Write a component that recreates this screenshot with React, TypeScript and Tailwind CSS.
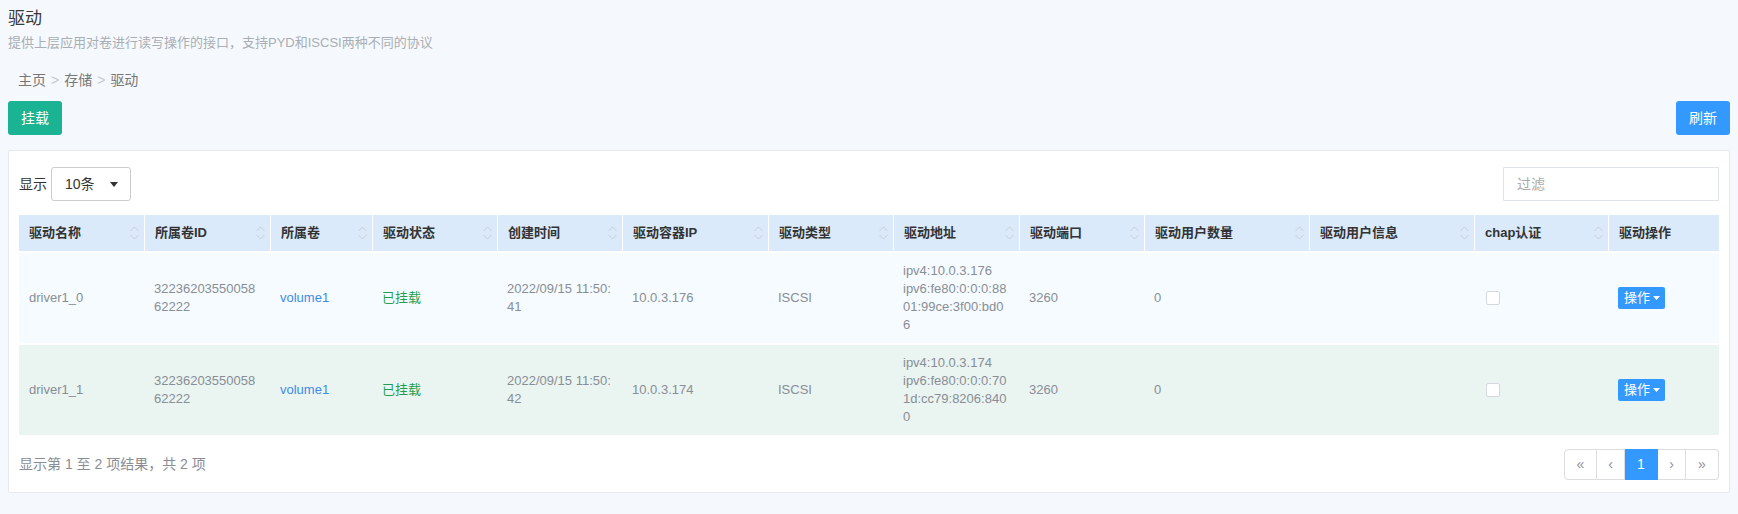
import React from "react";

const headers = [
  "驱动名称",
  "所属卷ID",
  "所属卷",
  "驱动状态",
  "创建时间",
  "驱动容器IP",
  "驱动类型",
  "驱动地址",
  "驱动端口",
  "驱动用户数量",
  "驱动用户信息",
  "chap认证",
  "驱动操作",
];

const colClasses = [
  "w-[125px]",
  "w-[126px]",
  "w-[102px]",
  "w-[125px]",
  "w-[125px]",
  "w-[146px]",
  "w-[125px]",
  "w-[126px]",
  "w-[125px]",
  "w-[165px]",
  "w-[165px]",
  "w-[134px]",
  "w-[111px]",
];

type Row = {
  name: string;
  volId: string;
  vol: string;
  status: string;
  time: string;
  ip: string;
  type: string;
  addr: string[];
  port: string;
  users: string;
  bg: string;
};

const rows: Row[] = [
  {
    name: "driver1_0",
    volId: "3223620355005862222",
    vol: "volume1",
    status: "已挂载",
    time: "2022/09/15 11:50:41",
    ip: "10.0.3.176",
    type: "ISCSI",
    addr: ["ipv4:10.0.3.176", "ipv6:fe80:0:0:0:8801:99ce:3f00:bd06"],
    port: "3260",
    users: "0",
    bg: "bg-[#f6fbff]",
  },
  {
    name: "driver1_1",
    volId: "3223620355005862222",
    vol: "volume1",
    status: "已挂载",
    time: "2022/09/15 11:50:42",
    ip: "10.0.3.174",
    type: "ISCSI",
    addr: ["ipv4:10.0.3.174", "ipv6:fe80:0:0:0:701d:cc79:8206:8400"],
    port: "3260",
    users: "0",
    bg: "bg-[#eaf4f1]",
  },
];

function SortIcon() {
  return (
    <svg width="9" height="14" viewBox="0 0 9 14" fill="none" stroke="#c9cdd2" strokeWidth="1" className="shrink-0">
      <path d="M0.5 5 L4.5 1 L8.5 5" />
      <path d="M0.5 9 L4.5 13 L8.5 9" />
    </svg>
  );
}

function Caret({ color, w, h }: { color: string; w: number; h: number }) {
  return (
    <svg width={w} height={h} viewBox={`0 0 ${w} ${h}`} className="shrink-0">
      <path d={`M0 0 L${w} 0 L${w / 2} ${h} Z`} fill={color} />
    </svg>
  );
}

export default function App() {
  const td = "px-[10px] py-[9px] align-middle border-t-2 border-white break-all";
  return (
    <div className="min-h-screen bg-[#f5f9fd] px-[8px] font-['Liberation_Sans','Noto_Sans_CJK_SC',sans-serif]">
      <div className="pt-[7px] text-[17px] leading-[24px] text-[#3a3a3a]">驱动</div>
      <div className="mt-[3px] text-[13px] leading-[18px] text-[#a9aeb4]">
        提供上层应用对卷进行读写操作的接口，支持PYD和ISCSI两种不同的协议
      </div>
      <div className="mt-[18px] pl-[10px] flex text-[14px] leading-[20px] text-[#777]">
        <span>主页</span>
        <span className="px-[5px] text-[#c8c8c8]">&gt;</span>
        <span>存储</span>
        <span className="px-[5px] text-[#c8c8c8]">&gt;</span>
        <span>驱动</span>
      </div>
      <div className="mt-[11px] flex justify-between">
        <button className="h-[34px] w-[54px] rounded-[3px] bg-[#1ab394] text-[14px] text-white">挂载</button>
        <button className="h-[34px] w-[54px] rounded-[3px] bg-[#3399ff] text-[14px] text-white">刷新</button>
      </div>

      <div className="mt-[15px] rounded-[2px] border border-[#e7eaec] bg-white px-[10px] pt-[16px] pb-[12px]">
        <div className="flex h-[34px] items-center justify-between">
          <div className="flex items-center">
            <span className="text-[14px] text-[#333]">显示</span>
            <div className="ml-[4px] flex h-[34px] w-[80px] items-center justify-between rounded-[3px] border border-[#cccccc] pl-[13px] pr-[12px] text-[14px] text-[#333]">
              <span>10条</span>
              <Caret color="#333" w={8} h={5} />
            </div>
          </div>
          <input
            placeholder="过滤"
            className="h-[34px] w-[216px] border border-[#dfe5eb] pl-[13px] text-[14px] text-[#333] outline-none placeholder:text-[#aaaaaa]"
          />
        </div>

        <table className="mt-[14px] w-[1700px] table-fixed border-separate border-spacing-0 text-[13px] leading-[18px]">
          <colgroup>
            {colClasses.map((c, i) => (
              <col key={i} className={c} />
            ))}
          </colgroup>
          <thead>
            <tr className="bg-[#daeafb]">
              {headers.map((h, i) => (
                <th
                  key={h}
                  className={`py-[9px] pl-[10px] pr-[5px] text-left font-bold text-[#333] ${i > 0 ? "border-l border-white" : ""}`}
                >
                  <div className="flex items-center justify-between">
                    <span className="whitespace-nowrap">{h}</span>
                    {i < headers.length - 1 && <SortIcon />}
                  </div>
                </th>
              ))}
            </tr>
          </thead>
          <tbody className="text-[#888e96]">
            {rows.map((r) => (
              <tr key={r.name} className={r.bg}>
                <td className={td}>{r.name}</td>
                <td className={td}>{r.volId}</td>
                <td className={`${td} text-[#3f8ae6]`}>{r.vol}</td>
                <td className={`${td} text-[#1f9f55]`}>{r.status}</td>
                <td className={td}>{r.time}</td>
                <td className={td}>{r.ip}</td>
                <td className={td}>{r.type}</td>
                <td className={td}>
                  {r.addr[0]}
                  <br />
                  {r.addr[1]}
                </td>
                <td className={td}>{r.port}</td>
                <td className={td}>{r.users}</td>
                <td className={td}></td>
                <td className={td}>
                  <div className="ml-[2px] h-[14px] w-[14px] rounded-[2px] border border-[#d5d9de] bg-white" />
                </td>
                <td className={td}>
                  <span className="inline-flex h-[22px] items-center gap-[3px] rounded-[2px] bg-[#3399ff] pl-[6px] pr-[5px] text-[13px] text-white">
                    操作
                    <Caret color="#fff" w={7} h={4} />
                  </span>
                </td>
              </tr>
            ))}
          </tbody>
        </table>

        <div className="mt-[14px] flex items-center justify-between">
          <span className="text-[14px] text-[#888e96]">显示第 1 至 2 项结果，共 2 项</span>
          <div className="flex h-[31px] text-[14px] text-[#8a919a]">
            <span className="flex w-[33px] items-center justify-center rounded-l-[4px] border border-[#dddddd]">«</span>
            <span className="flex w-[28px] items-center justify-center border-y border-r border-[#dddddd]">‹</span>
            <span className="flex w-[33px] items-center justify-center border-y border-r border-[#3399ff] bg-[#3399ff] text-white">1</span>
            <span className="flex w-[28px] items-center justify-center border-y border-r border-[#dddddd]">›</span>
            <span className="flex w-[33px] items-center justify-center rounded-r-[4px] border-y border-r border-[#dddddd]">»</span>
          </div>
        </div>
      </div>
    </div>
  );
}
